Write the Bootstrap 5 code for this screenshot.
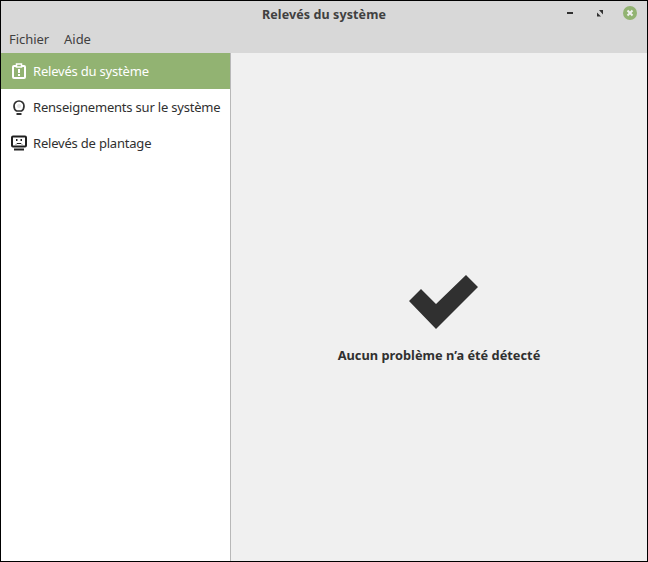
<!DOCTYPE html>
<html lang="fr">
<head>
<meta charset="utf-8">
<title>Relevés du système</title>
<link href="https://cdn.jsdelivr.net/npm/bootstrap@5.3.0/dist/css/bootstrap.min.css" rel="stylesheet">
<style>
html,body{height:100%;margin:0;background:#000;overflow:hidden}
body{font-family:"Noto Sans","Open Sans",sans-serif;font-size:13px;color:#303030}
.appwin{height:562px;width:648px;padding:1px;background:#000}
.appinner{height:100%;background:#f0f0f0}
.topzone{background:#d8d8d8;height:52px;flex:none}
.titlerow{height:29px;position:relative}
.titletext{font-weight:700;font-size:12.5px;color:#404040;letter-spacing:.1px}
.winbtns{position:absolute;right:0;top:0;height:27px}
.menurow{height:20px;padding-left:8px;gap:15px;color:#404040;letter-spacing:-.05px}
.sidepane{width:229px;flex:none;background:#fff;border-right:1px solid #b8b8b8;box-sizing:content-box}
.sideitem{height:36px;padding-left:10px;gap:6px;color:#303030;white-space:nowrap;letter-spacing:-.2px}
.sideitem span{padding-top:2px}
.sideitem.isactive{background:#92b372;color:#fff}
.sideitem svg{flex:none}
.mainpane{background:#f0f0f0;padding-top:222px}
.msgtext{font-weight:700;font-size:12.8px;color:#303030;margin-top:15px}
</style>
</head>
<body>
<div class="appwin">
<div class="appinner d-flex flex-column">
  <div class="topzone d-flex flex-column">
    <div class="titlerow d-flex align-items-center justify-content-center">
      <span class="titletext">Relevés du système</span>
      <svg class="winbtns" width="90" height="27" viewBox="0 0 90 27">
        <rect x="10" y="11" width="6" height="2" fill="#303030"/>
        <path d="M42 9h4v4.500zM40 11.500l4 4h-4z" fill="#303030"/>
        <circle cx="73" cy="12" r="7" fill="#92b372"/>
        <path d="M70.500 9.500l5 5m0-5l-5 5" stroke="#f0f0f0" stroke-width="2"/>
      </svg>
    </div>
    <div class="menurow d-flex align-items-center"><span>Fichier</span><span>Aide</span></div>
  </div>
  <div class="d-flex flex-grow-1" style="min-height:0">
    <div class="sidepane">
      <div class="sideitem isactive d-flex align-items-center">
        <svg width="16" height="16" viewBox="0 0 16 16" fill="none"><rect x="2" y="3" width="12" height="12" rx="1" stroke="#fff" stroke-width="2"/><rect x="5.500" y="1" width="5" height="3" fill="#92b372" stroke="#fff" stroke-width="1.500"/><rect x="7" y="6" width="2" height="4" fill="#fff"/><rect x="7" y="11" width="2" height="2" fill="#fff"/></svg>
        <span>Relevés du système</span>
      </div>
      <div class="sideitem d-flex align-items-center">
        <svg width="16" height="16" viewBox="0 0 16 16" fill="none"><circle cx="8" cy="7" r="2" fill="#e4e4e4"/><path d="M5.500 12C3.500 10.800 3 9.200 3 7a5 5 0 0 1 10 0c0 2.200-.5 3.800-2.500 5z" stroke="#303030" stroke-width="1.700"/><rect x="5.500" y="14" width="5" height="2" fill="#303030"/></svg>
        <span>Renseignements sur le système</span>
      </div>
      <div class="sideitem d-flex align-items-center">
        <svg width="16" height="16" viewBox="0 0 16 16" fill="none"><rect x="1" y="1.500" width="14" height="10" rx="1" stroke="#202020" stroke-width="2"/><rect x="3" y="13.500" width="10" height="2" fill="#202020"/><rect x="5" y="4" width="1.500" height="2" fill="#202020"/><rect x="9.500" y="4" width="1.500" height="2" fill="#202020"/><path d="M5 9.500L6 8.500h4l1 1" stroke="#202020"/></svg>
        <span>Relevés de plantage</span>
      </div>
    </div>
    <div class="mainpane flex-grow-1 d-flex flex-column align-items-center">
      <svg width="80" height="56" viewBox="0 0 80 56"><path d="M10 26L22 14 37 29 67 0 79 12 37 54z" fill="#303030"/></svg>
      <div class="msgtext">Aucun problème n’a été détecté</div>
    </div>
  </div>
</div>
</div>
</body>
</html>
